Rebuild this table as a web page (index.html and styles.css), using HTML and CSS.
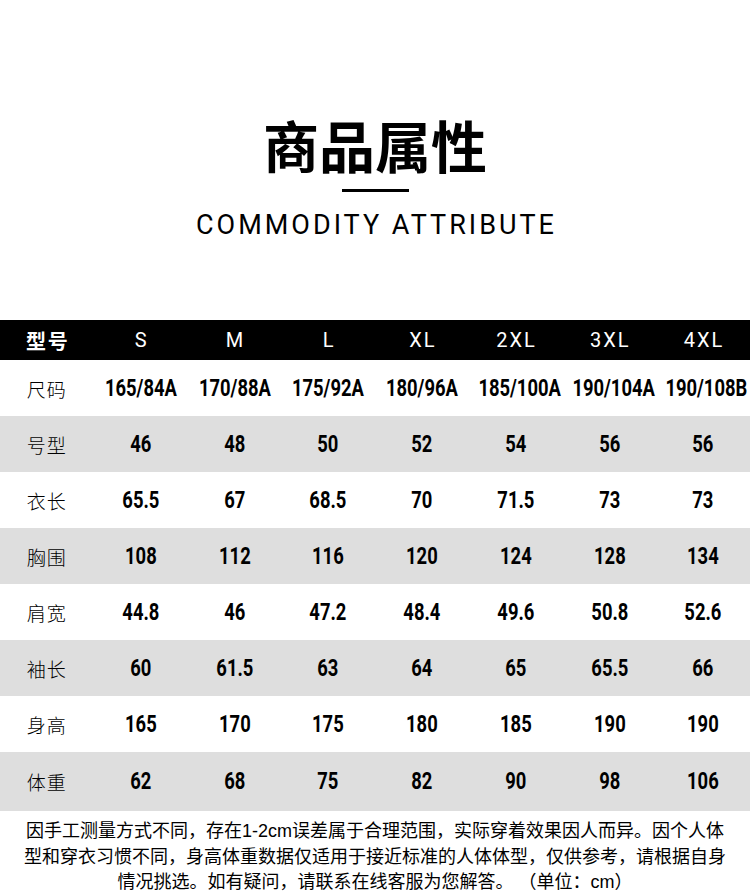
FILE: index.html
```html
<!DOCTYPE html>
<html lang="zh-CN">
<head>
<meta charset="utf-8">
<title>商品属性</title>
<link rel="stylesheet" href="styles.css">
</head>
<body>
<div class="page">
  <header class="head">
    <h1 class="title">商品属性</h1>
    <div class="rule"></div>
    <div class="subtitle">COMMODITY ATTRIBUTE</div>
  </header>
  <div class="table">
    <div class="row top">
      <div class="cell label">型号</div><div class="cell">S</div><div class="cell">M</div><div class="cell">L</div><div class="cell">XL</div><div class="cell">2XL</div><div class="cell">3XL</div><div class="cell">4XL</div>
    </div>
    <div class="row">
      <div class="cell label">尺码</div><div class="cell">165/84A</div><div class="cell">170/88A</div><div class="cell">175/92A</div><div class="cell">180/96A</div><div class="cell">185/100A</div><div class="cell">190/104A</div><div class="cell">190/108B</div>
    </div>
    <div class="row alt">
      <div class="cell label">号型</div><div class="cell">46</div><div class="cell">48</div><div class="cell">50</div><div class="cell">52</div><div class="cell">54</div><div class="cell">56</div><div class="cell">56</div>
    </div>
    <div class="row">
      <div class="cell label">衣长</div><div class="cell">65.5</div><div class="cell">67</div><div class="cell">68.5</div><div class="cell">70</div><div class="cell">71.5</div><div class="cell">73</div><div class="cell">73</div>
    </div>
    <div class="row alt">
      <div class="cell label">胸围</div><div class="cell">108</div><div class="cell">112</div><div class="cell">116</div><div class="cell">120</div><div class="cell">124</div><div class="cell">128</div><div class="cell">134</div>
    </div>
    <div class="row">
      <div class="cell label">肩宽</div><div class="cell">44.8</div><div class="cell">46</div><div class="cell">47.2</div><div class="cell">48.4</div><div class="cell">49.6</div><div class="cell">50.8</div><div class="cell">52.6</div>
    </div>
    <div class="row alt">
      <div class="cell label">袖长</div><div class="cell">60</div><div class="cell">61.5</div><div class="cell">63</div><div class="cell">64</div><div class="cell">65</div><div class="cell">65.5</div><div class="cell">66</div>
    </div>
    <div class="row">
      <div class="cell label">身高</div><div class="cell">165</div><div class="cell">170</div><div class="cell">175</div><div class="cell">180</div><div class="cell">185</div><div class="cell">190</div><div class="cell">190</div>
    </div>
    <div class="row alt last">
      <div class="cell label">体重</div><div class="cell">62</div><div class="cell">68</div><div class="cell">75</div><div class="cell">82</div><div class="cell">90</div><div class="cell">98</div><div class="cell">106</div>
    </div>
  </div>
  <p class="note">因手工测量方式不同，存在1-2cm误差属于合理范围，实际穿着效果因人而异。因个人体<br>型和穿衣习惯不同，身高体重数据仅适用于接近标准的人体体型，仅供参考，请根据自身<br>情况挑选。如有疑问，请联系在线客服为您解答。 （单位：cm）</p>
</div>
</body>
</html>
```

FILE: styles.css
```css
html, body {
  margin: 0;
  padding: 0;
  background: #ffffff;
}

.page {
  width: 750px;
  color: #000;
  font-family: "Noto Sans CJK SC", sans-serif;
}

.head {
  display: flex;
  flex-direction: column;
  align-items: center;
  padding-top: 112px;
  height: 320px;
  box-sizing: border-box;
}

.title {
  margin: 0;
  font-size: 56px;
  line-height: 64px;
  font-weight: 700;
  letter-spacing: 0;
}

.rule {
  width: 67px;
  height: 3px;
  background: #000;
  margin-top: 13px;
}

.subtitle {
  margin-top: 18px;
  font-family: Roboto, "Liberation Sans", sans-serif;
  font-size: 27px;
  line-height: 30px;
  letter-spacing: 3px;
  font-weight: 400;
  padding-left: 3px;
}

.table {
  display: flex;
  flex-direction: column;
}

.row {
  display: grid;
  grid-template-columns: repeat(8, minmax(0, 1fr));
  height: 56px;
  align-items: center;
}

.row.alt {
  background: #dedede;
}

.row.last {
  height: 59px;
}

.row.top {
  background: #000;
  color: #fff;
  height: 40px;
}

.cell {
  text-align: center;
  font-family: Roboto, "Liberation Sans", sans-serif;
  font-weight: 700;
  font-size: 23px;
  white-space: nowrap;
  transform: scaleX(0.8);
}

.row.top .cell {
  font-family: Roboto, "Liberation Sans", sans-serif;
  font-weight: 400;
  font-size: 20px;
  letter-spacing: 2px;
  transform: none;
  padding-left: 2px;
}

.cell.label {
  font-family: "Noto Sans CJK SC", sans-serif;
  font-weight: 300;
  font-size: 19px;
  color: #000;
  letter-spacing: 1px;
  transform: none;
}

.row.top .cell.label {
  font-family: "Noto Sans CJK SC", sans-serif;
  font-weight: 700;
  color: #fff;
  letter-spacing: 2px;
}

.note {
  margin: 8px 0 0;
  padding: 0 10px;
  text-align: center;
  font-family: "Liberation Sans", "Noto Sans CJK SC", sans-serif;
  font-size: 18px;
  letter-spacing: 0;
  line-height: 25.5px;
  color: #000;
  white-space: nowrap;
}
```
